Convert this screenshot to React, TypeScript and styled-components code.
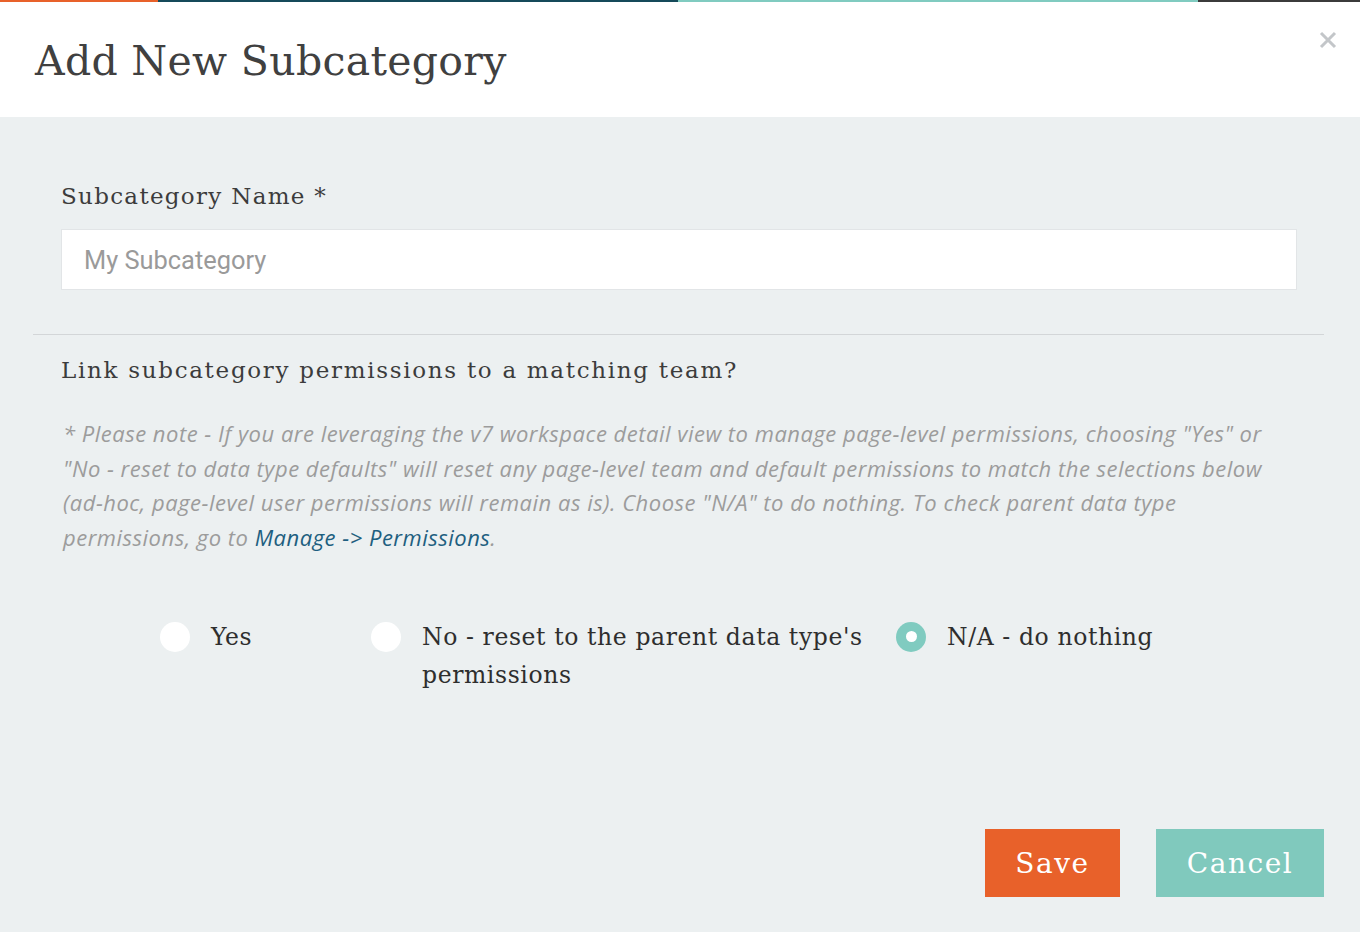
import React, { useState } from 'react';
import styled, { createGlobalStyle } from 'styled-components';

const GlobalStyle = createGlobalStyle`
  html, body {
    margin: 0;
    padding: 0;
    background: #ecf0f1;
  }
  * {
    box-sizing: border-box;
  }
`;

const slab = `"DejaVu Serif", "Liberation Serif", serif`;

const Modal = styled.div`
  width: 1360px;
  height: 932px;
  background: #ecf0f1;
  display: flex;
  flex-direction: column;
`;

const ColorBar = styled.div`
  display: grid;
  grid-template-columns: 158px 520px 520px 1fr;
  height: 2px;
`;

const BarPiece = styled.div<{ color: string }>`
  background: ${(p) => p.color};
`;

const Header = styled.header`
  position: relative;
  height: 115px;
  background: #fff;
  display: flex;
  align-items: center;
  padding-left: 35px;
`;

const Title = styled.h1`
  margin: 2px 0 0;
  font-family: ${slab};
  font-weight: 400;
  font-size: 41px;
  color: #404040;
  letter-spacing: 0.3px;
`;

const Close = styled.button`
  position: absolute;
  top: 26px;
  right: 20px;
  width: 24px;
  height: 24px;
  padding: 0;
  border: 0;
  background: none;
  cursor: pointer;
  display: flex;
  align-items: center;
  justify-content: center;
`;

const Body = styled.div`
  flex: 1;
  padding: 0 36px 0 33px;
  display: flex;
  flex-direction: column;
`;

const Section = styled.div`
  padding: 0 27px 0 28px;
`;

const Label = styled.div<{ spacing: number }>`
  font-family: ${slab};
  font-size: 23px;
  line-height: 26px;
  color: #3c3c3c;
  letter-spacing: ${(p) => p.spacing}px;
`;

const NameSection = styled(Section)`
  padding-top: 66px;
  padding-bottom: 44px;
  border-bottom: 1px solid #d3d6d8;
`;

const Input = styled.input`
  display: block;
  width: 100%;
  height: 61px;
  margin-top: 20px;
  padding: 0 22px;
  border: 1px solid #e2e5e7;
  background: #fff;
  font-family: Roboto, "Noto Sans", sans-serif;
  font-size: 25.4px;
  color: #333;
  outline: none;
  &::placeholder {
    color: #9a9a9a;
  }
`;

const LinkSection = styled(Section)`
  padding-top: 22px;
`;

const Note = styled.p`
  margin: 33px 0 0 2px;
  font-family: "Open Sans", Lato, sans-serif;
  font-style: italic;
  font-size: 22px;
  letter-spacing: 0.5px;
  line-height: 34.7px;
  color: #9c9c9c;
`;

const NoteLink = styled.a`
  color: #1e5f80;
  text-decoration: none;
`;

const Options = styled.div`
  display: grid;
  grid-template-columns: 211px 525px auto;
  margin-top: 63px;
  padding-left: 99px;
`;

const Option = styled.label`
  display: flex;
  align-items: flex-start;
  cursor: pointer;
`;

const Dot = styled.span<{ checked: boolean }>`
  flex: none;
  width: 30px;
  height: 30px;
  margin-top: 4px;
  border-radius: 50%;
  background: ${(p) => (p.checked ? '#80cbc0' : '#fff')};
  display: flex;
  align-items: center;
  justify-content: center;
  &::after {
    content: '';
    width: 11px;
    height: 11px;
    border-radius: 50%;
    background: #fff;
    display: ${(p) => (p.checked ? 'block' : 'none')};
  }
`;

const OptionText = styled.span`
  margin-left: 21px;
  font-family: ${slab};
  font-size: 23.5px;
  line-height: 38px;
  color: #2e2e2e;
  letter-spacing: 0.6px;
`;

const Footer = styled.div`
  margin-top: auto;
  margin-bottom: 35px;
  display: flex;
  justify-content: flex-end;
  gap: 36px;
`;

const Button = styled.button<{ bg: string; w: number }>`
  width: ${(p) => p.w}px;
  height: 68px;
  border: 0;
  background: ${(p) => p.bg};
  color: #fff;
  font-family: ${slab};
  font-size: 28px;
  letter-spacing: 1.5px;
  cursor: pointer;
`;

const choices = [
  { id: 'yes', text: 'Yes' },
  { id: 'no', text: "No - reset to the parent data type's permissions" },
  { id: 'na', text: 'N/A - do nothing' },
];

export default function App() {
  const [choice, setChoice] = useState('na');

  return (
    <>
      <GlobalStyle />
      <Modal>
        <ColorBar>
          <BarPiece color="#e8612a" />
          <BarPiece color="#154a5a" />
          <BarPiece color="#80cbc0" />
          <BarPiece color="#3b3b3b" />
        </ColorBar>
        <Header>
          <Title>Add New Subcategory</Title>
          <Close aria-label="Close">
            <svg width="18" height="18" viewBox="0 0 18 18">
              <path d="M2 2 L16 16 M16 2 L2 16" stroke="#c3c6c9" strokeWidth="3" />
            </svg>
          </Close>
        </Header>
        <Body>
          <NameSection>
            <Label spacing={1.3}>Subcategory Name *</Label>
            <Input placeholder="My Subcategory" />
          </NameSection>
          <LinkSection>
            <Label spacing={1.7}>Link subcategory permissions to a matching team?</Label>
            <Note>
              * Please note - If you are leveraging the v7 workspace detail view to manage
              page-level permissions, choosing "Yes" or "No - reset to data type defaults" will
              reset any page-level team and default permissions to match the selections below
              (ad-hoc, page-level user permissions will remain as is). Choose "N/A" to do
              nothing. To check parent data type permissions, go to{' '}
              <NoteLink href="#">Manage -&gt; Permissions</NoteLink>.
            </Note>
            <Options>
              {choices.map((c) => (
                <Option key={c.id} onClick={() => setChoice(c.id)}>
                  <Dot checked={choice === c.id} />
                  <OptionText>{c.text}</OptionText>
                </Option>
              ))}
            </Options>
          </LinkSection>
          <Footer>
            <Button bg="#e8612a" w={135}>Save</Button>
            <Button bg="#80c9bd" w={168}>Cancel</Button>
          </Footer>
        </Body>
      </Modal>
    </>
  );
}
